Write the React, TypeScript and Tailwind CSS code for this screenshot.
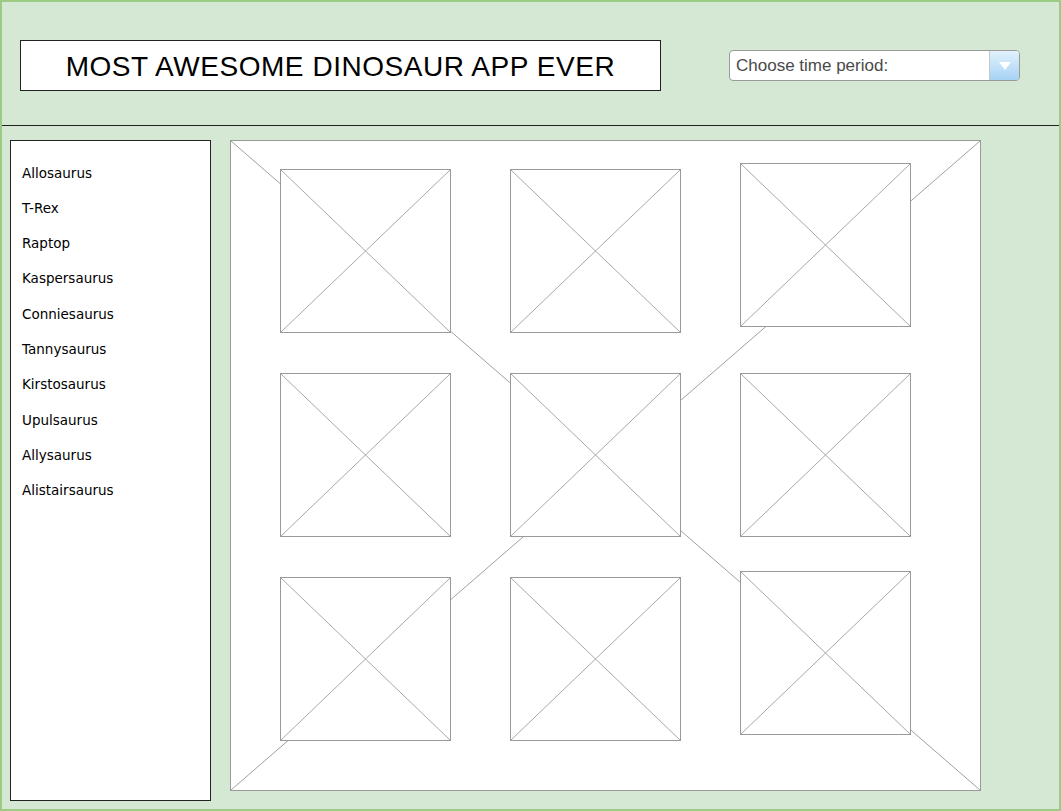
import React from "react";

const dinos = [
  "Allosaurus",
  "T-Rex",
  "Raptop",
  "Kaspersaurus",
  "Conniesaurus",
  "Tannysaurus",
  "Kirstosaurus",
  "Upulsaurus",
  "Allysaurus",
  "Alistairsaurus",
];

function Placeholder({ className = "" }: { className?: string }) {
  return (
    <div className={`relative w-[171px] h-[164px] shrink-0 bg-white border border-[#9a9a9a] ${className}`}>
      <svg className="absolute inset-0 w-full h-full" viewBox="0 0 100 100" preserveAspectRatio="none">
        <line x1="0" y1="0" x2="100" y2="100" stroke="#a8a8a8" strokeWidth="1" vectorEffect="non-scaling-stroke" />
        <line x1="100" y1="0" x2="0" y2="100" stroke="#a8a8a8" strokeWidth="1" vectorEffect="non-scaling-stroke" />
      </svg>
    </div>
  );
}

export default function App() {
  return (
    <div className="w-[1061px] h-[811px] bg-[#d5e8d4] border-2 border-[#9ccb84] flex flex-col overflow-hidden">
      {/* header */}
      <div className="h-[124px] shrink-0 border-b border-[#222] flex items-start justify-between pl-[18px] pr-[39px]">
        <div className="mt-[38px] w-[641px] h-[51px] bg-white border border-[#222] flex items-center justify-center pt-[3px]">
          <span className="text-[28px] text-black font-['Liberation_Sans',sans-serif] tracking-[0.55px]">
            MOST AWESOME DINOSAUR APP EVER
          </span>
        </div>
        <div className="mt-[48px] w-[291px] h-[31px] bg-white border border-[#9a9a9a] rounded-[4px] flex overflow-hidden">
          <div className="flex-1 flex items-center pl-[6px] text-[17px] text-[#4a4a4a] font-['Liberation_Sans',sans-serif]">
            Choose time period:
          </div>
          <div className="w-[30px] border-l border-[#c8c8c8] bg-gradient-to-b from-[#e2f1fc] to-[#a6d3f5] flex items-center justify-center">
            <svg width="14" height="10" viewBox="0 0 14 10">
              <polygon points="1,1 13,1 7,9" fill="#ffffff" />
            </svg>
          </div>
        </div>
      </div>

      {/* body */}
      <div className="flex-1 flex gap-[19px] pt-[14px] pl-[8px]">
        <div className="w-[201px] h-[661px] bg-white border border-[#222] pt-[14px] pl-[11px] font-['DejaVu_Sans',sans-serif] text-[13.5px] text-black">
          {dinos.map((d) => (
            <div key={d} className="h-[35.3px] flex items-center">
              {d}
            </div>
          ))}
        </div>

        <div className="relative w-[751px] h-[651px] bg-white border border-[#9a9a9a] pt-[28px] pl-[49px] flex flex-col gap-[40px]">
          <svg className="absolute inset-0 w-full h-full" viewBox="0 0 100 100" preserveAspectRatio="none">
            <line x1="0" y1="0" x2="100" y2="100" stroke="#a0a0a0" strokeWidth="1" vectorEffect="non-scaling-stroke" />
            <line x1="100" y1="0" x2="0" y2="100" stroke="#a0a0a0" strokeWidth="1" vectorEffect="non-scaling-stroke" />
          </svg>
          <div className="relative flex items-start gap-[59px]">
            <Placeholder />
            <Placeholder />
            <Placeholder className="-mt-[6px]" />
          </div>
          <div className="relative flex items-start gap-[59px]">
            <Placeholder />
            <Placeholder />
            <Placeholder />
          </div>
          <div className="relative flex items-start gap-[59px]">
            <Placeholder />
            <Placeholder />
            <Placeholder className="-mt-[6px]" />
          </div>
        </div>
      </div>
    </div>
  );
}
